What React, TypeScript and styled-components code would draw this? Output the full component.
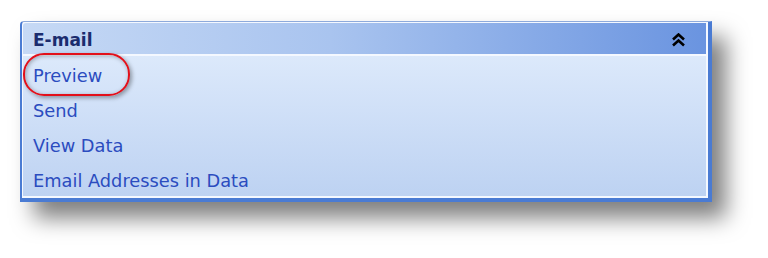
import styled, { createGlobalStyle } from "styled-components";

const GlobalStyle = createGlobalStyle`
  html, body {
    margin: 0;
    padding: 0;
    background: #ffffff;
  }
`;

const Page = styled.div`
  padding: 21px 0 0 20px;
  width: 768px;
  height: 258px;
  box-sizing: border-box;
`;

const Panel = styled.div`
  position: relative;
  width: 692px;
  height: 181px;
  box-sizing: border-box;
  border-style: solid;
  border-color: #8eaadb #4a7bd3 #4a7bd3 #4a7bd3;
  border-width: 1px 4px 4px 2px;
  border-radius: 4px 0 0 0;
  background: #f4f8ff;
  padding: 1px 2px 2px 1px;
  display: flex;
  flex-direction: column;
  box-shadow: 14px 16px 22px rgba(0, 0, 0, 0.5);
`;

const Header = styled.div`
  height: 33px;
  flex-shrink: 0;
  display: flex;
  align-items: center;
  justify-content: space-between;
  padding: 2px 20px 0 10px;
  box-sizing: border-box;
  background: linear-gradient(to right, #c6d9f5 0%, #a9c4ef 45%, #6a94e0 100%);
  border-radius: 3px 0 0 0;
  border-bottom: 2px solid #f4f8ff;
`;

const Title = styled.span`
  font-family: "DejaVu Sans", Verdana, sans-serif;
  font-weight: bold;
  font-size: 17px;
  color: #1b2c6e;
`;

const Body = styled.div`
  flex: 1;
  min-height: 0;
  overflow: hidden;
  display: flex;
  flex-direction: column;
  padding-top: 2px;
  background: linear-gradient(to bottom, #dce9fb 0%, #bdd2f2 100%);
`;

const Item = styled.div`
  height: 35px;
  flex-shrink: 0;
  display: flex;
  align-items: center;
  padding-left: 10px;
  font-family: "DejaVu Sans", Verdana, sans-serif;
  font-size: 17.8px;
  color: #2b4cbf;
  cursor: pointer;
`;

const Callout = styled.div`
  position: absolute;
  left: 1px;
  top: 31px;
  width: 107px;
  height: 43px;
  box-sizing: border-box;
  border: 2.5px solid #e3101a;
  border-radius: 21px;
  box-shadow: 2px 2px 4px rgba(0, 0, 0, 0.35), inset 1px 1px 4px rgba(0, 0, 0, 0.3);
  pointer-events: none;
`;

function ChevronsUp() {
  return (
    <svg width="15" height="14" viewBox="0 0 15 14">
      <path d="M2 6.5 L7.5 1.5 L13 6.5" fill="none" stroke="#000" strokeWidth="2.6" />
      <path d="M2 12.5 L7.5 7.5 L13 12.5" fill="none" stroke="#000" strokeWidth="2.6" />
    </svg>
  );
}

const items = ["Preview", "Send", "View Data", "Email Addresses in Data"];

export default function App() {
  return (
    <Page>
      <GlobalStyle />
      <Panel>
        <Header>
          <Title>E-mail</Title>
          <ChevronsUp />
        </Header>
        <Body>
          {items.map((label) => (
            <Item key={label}>{label}</Item>
          ))}
        </Body>
        <Callout />
      </Panel>
    </Page>
  );
}
